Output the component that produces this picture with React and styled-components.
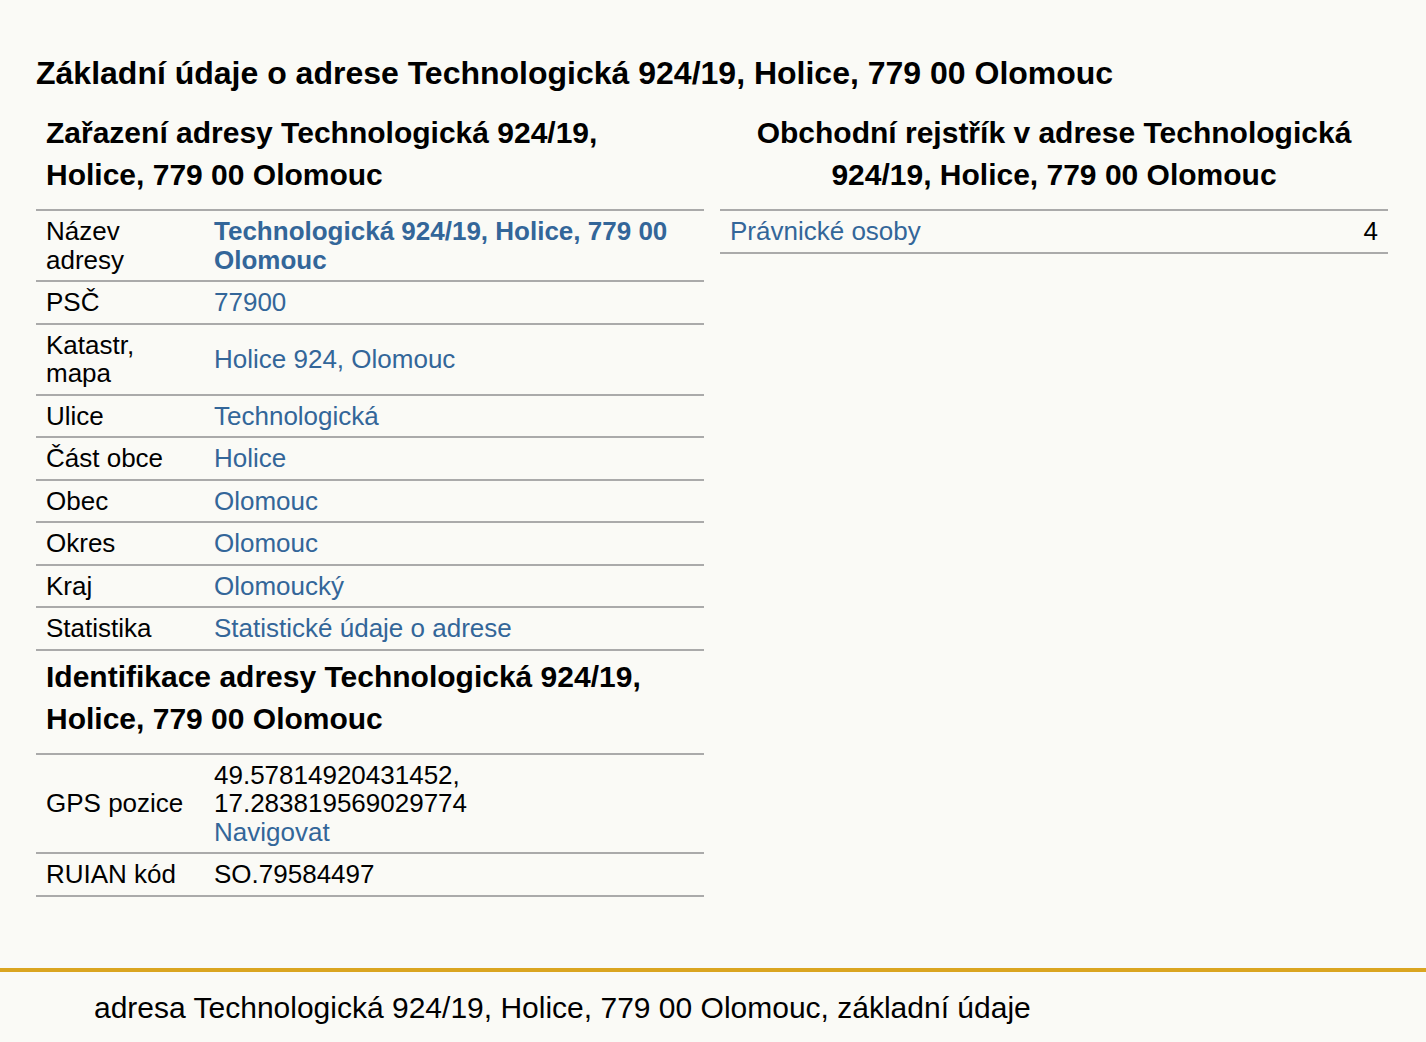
import React from 'react'
import styled, { createGlobalStyle } from 'styled-components'

const GlobalStyle = createGlobalStyle`
  html, body {
    margin: 0;
    padding: 0;
    background: #fafaf6;
    font-family: "Liberation Sans", Arial, sans-serif;
    color: #000;
  }
`

const Page = styled.div`
  min-height: 1042px;
  display: flex;
  flex-direction: column;
`

const Main = styled.main`
  padding: 55px 38px 0 36px;
  flex: 1;
`

const Title = styled.h1`
  margin: 0 0 21px 0;
  font-size: 32px;
  line-height: 36px;
  font-weight: bold;
`

const Columns = styled.div`
  display: grid;
  grid-template-columns: 1fr 1fr;
  column-gap: 16px;
  align-items: start;
`

const Column = styled.section`
  display: flex;
  flex-direction: column;
`

const SubTitle = styled.h2`
  margin: ${props => props.$top || 0}px 0 13px 0;
  padding: 0 10px;
  font-size: 30px;
  line-height: 42px;
  font-weight: bold;
  text-align: ${props => props.$center ? 'center' : 'left'};
`

const Table = styled.div`
  border-top: 2px solid #aaa;
`

const Row = styled.div`
  display: grid;
  grid-template-columns: ${props => props.$split ? '1fr auto' : '168px 1fr'};
  align-items: center;
  border-bottom: 2px solid #aaa;
  font-size: 26px;
  line-height: 28.5px;
`

const Cell = styled.div`
  padding: 6px 10px;
  font-weight: ${props => props.$bold ? 'bold' : 'normal'};
`

const Link = styled.a`
  color: #336699;
  text-decoration: none;
`

const Footer = styled.footer`
  margin-top: 69px;
  border-top: 4px solid #daa520;
  padding: 18px 20px 17px 94px;
  font-size: 30px;
  line-height: 35px;
`

const address = 'Technologická 924/19, Holice, 779 00 Olomouc'

const rows = [
  { label: 'Název adresy', value: address, bold: true },
  { label: 'PSČ', value: '77900' },
  { label: 'Katastr, mapa', value: 'Holice 924, Olomouc' },
  { label: 'Ulice', value: 'Technologická' },
  { label: 'Část obce', value: 'Holice' },
  { label: 'Obec', value: 'Olomouc' },
  { label: 'Okres', value: 'Olomouc' },
  { label: 'Kraj', value: 'Olomoucký' },
  { label: 'Statistika', value: 'Statistické údaje o adrese' }
]

export default function App () {
  return <Page>
    <GlobalStyle />
    <Main>
      <Title>Základní údaje o adrese {address}</Title>
      <Columns>
        <Column>
          <SubTitle>Zařazení adresy Technologická 924/19, Holice, 779 00 Olomouc</SubTitle>
          <Table>
            {rows.map(row => (
              <Row key={row.label}>
                <Cell>{row.label}</Cell>
                <Cell $bold={row.bold}><Link href='#'>{row.value}</Link></Cell>
              </Row>
            ))}
          </Table>
          <SubTitle $top={5}>Identifikace adresy Technologická 924/19, Holice, 779 00 Olomouc</SubTitle>
          <Table>
            <Row>
              <Cell>GPS pozice</Cell>
              <Cell>
                49.57814920431452,<br />
                17.283819569029774<br />
                <Link href='#'>Navigovat</Link>
              </Cell>
            </Row>
            <Row>
              <Cell>RUIAN kód</Cell>
              <Cell>SO.79584497</Cell>
            </Row>
          </Table>
        </Column>
        <Column>
          <SubTitle $center>Obchodní rejstřík v adrese Technologická 924/19, Holice, 779 00 Olomouc</SubTitle>
          <Table>
            <Row $split>
              <Cell><Link href='#'>Právnické osoby</Link></Cell>
              <Cell>4</Cell>
            </Row>
          </Table>
        </Column>
      </Columns>
    </Main>
    <Footer>adresa {address}, základní údaje</Footer>
  </Page>
}
